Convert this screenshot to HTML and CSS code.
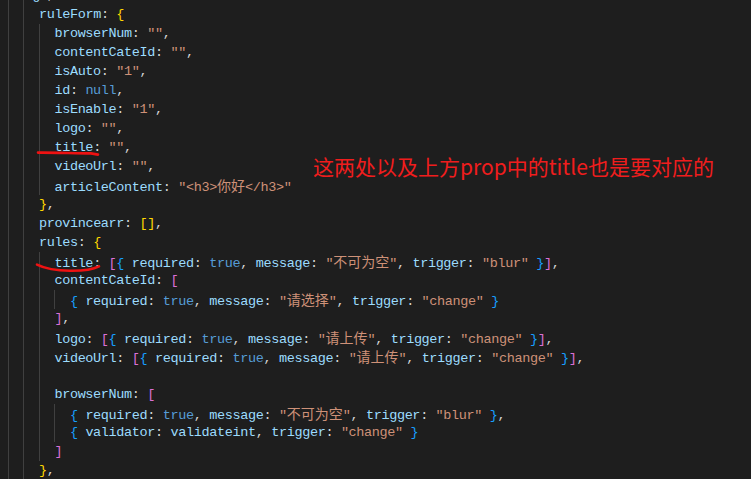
FILE: index.html
```html
<!DOCTYPE html>
<html lang="zh-CN">
<head>
<meta charset="utf-8">
<title>code</title>
<link rel="stylesheet" href="styles.css">
</head>
<body>
<div class="editor">
<div class="ln"><span class="g"></span><span class="g"> <span class="k">g</span></span> ,</div>
<div class="ln"><span class="g"></span><span class="g"></span><span class="k">ruleForm</span>: <span class="y">{</span></div>
<div class="ln"><span class="g"></span><span class="g"></span><span class="g"></span><span class="k">browserNum</span>: <span class="s">""</span>,</div>
<div class="ln"><span class="g"></span><span class="g"></span><span class="g"></span><span class="k">contentCateId</span>: <span class="s">""</span>,</div>
<div class="ln"><span class="g"></span><span class="g"></span><span class="g"></span><span class="k">isAuto</span>: <span class="s">"1"</span>,</div>
<div class="ln"><span class="g"></span><span class="g"></span><span class="g"></span><span class="k">id</span>: <span class="b">null</span>,</div>
<div class="ln"><span class="g"></span><span class="g"></span><span class="g"></span><span class="k">isEnable</span>: <span class="s">"1"</span>,</div>
<div class="ln"><span class="g"></span><span class="g"></span><span class="g"></span><span class="k">logo</span>: <span class="s">""</span>,</div>
<div class="ln"><span class="g"></span><span class="g"></span><span class="g"></span><span class="k">title</span>: <span class="s">""</span>,</div>
<div class="ln"><span class="g"></span><span class="g"></span><span class="g"></span><span class="k">videoUrl</span>: <span class="s">""</span>,</div>
<div class="ln"><span class="g"></span><span class="g"></span><span class="g"></span><span class="k">articleContent</span>: <span class="s">"&lt;h3&gt;<span class="c">你好</span>&lt;/h3&gt;"</span></div>
<div class="ln"><span class="g"></span><span class="g"></span><span class="y">}</span>,</div>
<div class="ln"><span class="g"></span><span class="g"></span><span class="k">provincearr</span>: <span class="y">[]</span>,</div>
<div class="ln"><span class="g"></span><span class="g"></span><span class="k">rules</span>: <span class="y">{</span></div>
<div class="ln"><span class="g"></span><span class="g"></span><span class="g"></span><span class="k">title</span>: <span class="m">[</span><span class="u">{</span> <span class="k">required</span>: <span class="b">true</span>, <span class="k">message</span>: <span class="s">"<span class="c">不可为空</span>"</span>, <span class="k">trigger</span>: <span class="s">"blur"</span> <span class="u">}</span><span class="m">]</span>,</div>
<div class="ln"><span class="g"></span><span class="g"></span><span class="g"></span><span class="k">contentCateId</span>: <span class="m">[</span></div>
<div class="ln"><span class="g"></span><span class="g"></span><span class="g"></span><span class="g"></span><span class="u">{</span> <span class="k">required</span>: <span class="b">true</span>, <span class="k">message</span>: <span class="s">"<span class="c">请选择</span>"</span>, <span class="k">trigger</span>: <span class="s">"change"</span> <span class="u">}</span></div>
<div class="ln"><span class="g"></span><span class="g"></span><span class="g"></span><span class="m">]</span>,</div>
<div class="ln"><span class="g"></span><span class="g"></span><span class="g"></span><span class="k">logo</span>: <span class="m">[</span><span class="u">{</span> <span class="k">required</span>: <span class="b">true</span>, <span class="k">message</span>: <span class="s">"<span class="c">请上传</span>"</span>, <span class="k">trigger</span>: <span class="s">"change"</span> <span class="u">}</span><span class="m">]</span>,</div>
<div class="ln"><span class="g"></span><span class="g"></span><span class="g"></span><span class="k">videoUrl</span>: <span class="m">[</span><span class="u">{</span> <span class="k">required</span>: <span class="b">true</span>, <span class="k">message</span>: <span class="s">"<span class="c">请上传</span>"</span>, <span class="k">trigger</span>: <span class="s">"change"</span> <span class="u">}</span><span class="m">]</span>,</div>
<div class="ln"><span class="g"></span><span class="g"></span><span class="g"></span></div>
<div class="ln"><span class="g"></span><span class="g"></span><span class="g"></span><span class="k">browserNum</span>: <span class="m">[</span></div>
<div class="ln"><span class="g"></span><span class="g"></span><span class="g"></span><span class="g"></span><span class="u">{</span> <span class="k">required</span>: <span class="b">true</span>, <span class="k">message</span>: <span class="s">"<span class="c">不可为空</span>"</span>, <span class="k">trigger</span>: <span class="s">"blur"</span> <span class="u">}</span>,</div>
<div class="ln"><span class="g"></span><span class="g"></span><span class="g"></span><span class="g"></span><span class="u">{</span> <span class="k">validator</span>: <span class="k">validateint</span>, <span class="k">trigger</span>: <span class="s">"change"</span> <span class="u">}</span></div>
<div class="ln"><span class="g"></span><span class="g"></span><span class="g"></span><span class="m">]</span></div>
<div class="ln"><span class="g"></span><span class="g"></span><span class="y">}</span>,</div>
</div>
<svg class="marks" width="751" height="479" viewBox="0 0 751 479">
  <path d="M38 152.6 C 55 152.4, 75 153.4, 91 153.4 L 98 154.6" />
  <path d="M37 264.6 C 45 268.6, 55 270.6, 70 270.8 S 92 270, 99 266.4" />
</svg>
<div class="note">这两处以及上方prop中的title也是要对应的</div>
</body>
</html>
```
FILE: styles.css
```css
html, body {
  margin: 0;
  padding: 0;
}
body {
  background: #1e1e1e;
  width: 751px;
  height: 479px;
  overflow: hidden;
  position: relative;
}
.editor {
  padding-left: 8px;
  margin-top: -14px;
  font-family: "Liberation Mono", "Noto Sans CJK SC", monospace;
  font-size: 13.5px;
  letter-spacing: -0.36px;
  line-height: 19px;
  color: #d4d4d4;
}
.ln {
  height: 19px;
  white-space: pre;
}
.g {
  display: inline-block;
  box-sizing: border-box;
  width: 15.48px;
  height: 19px;
  vertical-align: top;
  border-left: 1px solid #404040;
}
.k { color: #9cdcfe; }
.s { color: #ce9178; }
.b { color: #569cd6; }
.y { color: #ffd700; }
.m { color: #da70d6; }
.u { color: #179fff; }
.c {
  font-family: "Noto Sans CJK SC", sans-serif;
  font-size: 14px;
  letter-spacing: 0;
}
.marks {
  position: absolute;
  left: 0;
  top: 0;
  pointer-events: none;
}
.marks path {
  fill: none;
  stroke: #ee1212;
  stroke-width: 2.6;
  stroke-linecap: round;
}
.note {
  position: absolute;
  left: 313px;
  top: 156px;
  font-family: "Noto Sans CJK SC", sans-serif;
  font-size: 21px;
  line-height: 21px;
  color: #f01d1d;
  white-space: nowrap;
}
```
